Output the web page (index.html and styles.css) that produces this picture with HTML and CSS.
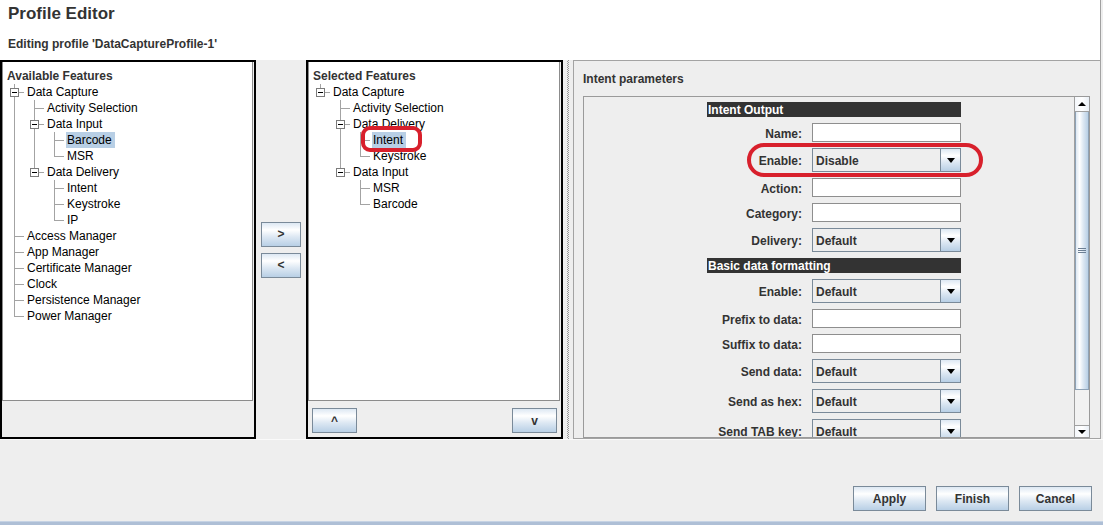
FILE: index.html
```
<!DOCTYPE html>
<html>
<head>
<meta charset="utf-8">
<title>Profile Editor</title>
<link rel="stylesheet" href="styles.css">
</head>
<body>
<div class="header">
  <div class="title">Profile Editor</div>
  <div class="subtitle">Editing profile 'DataCaptureProfile-1'</div>
</div>
<div class="main">
  <div class="panel">
    <div class="tree">
      <div class="tree-head">Available Features</div>
      <div class="row"><span class="g tee"><i class="box"></i></span><span class="lbl">Data Capture</span></div>
      <div class="row"><span class="g pipe"></span><span class="g tee"></span><span class="lbl">Activity Selection</span></div>
      <div class="row"><span class="g pipe"></span><span class="g tee"><i class="box"></i></span><span class="lbl">Data Input</span></div>
      <div class="row sel"><span class="g pipe"></span><span class="g pipe"></span><span class="g tee"></span><span class="lbl">Barcode</span></div>
      <div class="row"><span class="g pipe"></span><span class="g pipe"></span><span class="g end"></span><span class="lbl">MSR</span></div>
      <div class="row"><span class="g pipe"></span><span class="g end"><i class="box"></i></span><span class="lbl">Data Delivery</span></div>
      <div class="row"><span class="g pipe"></span><span class="g"></span><span class="g tee"></span><span class="lbl">Intent</span></div>
      <div class="row"><span class="g pipe"></span><span class="g"></span><span class="g tee"></span><span class="lbl">Keystroke</span></div>
      <div class="row"><span class="g pipe"></span><span class="g"></span><span class="g end"></span><span class="lbl">IP</span></div>
      <div class="row"><span class="g tee"></span><span class="lbl">Access Manager</span></div>
      <div class="row"><span class="g tee"></span><span class="lbl">App Manager</span></div>
      <div class="row"><span class="g tee"></span><span class="lbl">Certificate Manager</span></div>
      <div class="row"><span class="g tee"></span><span class="lbl">Clock</span></div>
      <div class="row"><span class="g tee"></span><span class="lbl">Persistence Manager</span></div>
      <div class="row"><span class="g end"></span><span class="lbl">Power Manager</span></div>
    </div>
    <div class="panel-foot"></div>
  </div>
  <div class="movers">
    <button class="btn mover">&gt;</button>
    <button class="btn mover">&lt;</button>
  </div>
  <div class="panel panel-mid">
    <div class="tree">
      <div class="tree-head">Selected Features</div>
      <div class="row"><span class="g end"><i class="box"></i></span><span class="lbl">Data Capture</span></div>
      <div class="row"><span class="g"></span><span class="g tee"></span><span class="lbl">Activity Selection</span></div>
      <div class="row"><span class="g"></span><span class="g tee"><i class="box"></i></span><span class="lbl">Data Delivery</span></div>
      <div class="row sel"><span class="g"></span><span class="g pipe"></span><span class="g tee"></span><span class="lbl">Intent</span></div>
      <div class="row"><span class="g"></span><span class="g pipe"></span><span class="g end"></span><span class="lbl">Keystroke</span></div>
      <div class="row"><span class="g"></span><span class="g end"><i class="box"></i></span><span class="lbl">Data Input</span></div>
      <div class="row"><span class="g"></span><span class="g"></span><span class="g tee"></span><span class="lbl">MSR</span></div>
      <div class="row"><span class="g"></span><span class="g"></span><span class="g end"></span><span class="lbl">Barcode</span></div>
      <div class="mark-intent"></div>
    </div>
    <div class="panel-foot order-btns">
      <button class="btn order">^</button>
      <button class="btn order">v</button>
    </div>
  </div>
  <div class="splitter"><div class="dots"></div></div>
  <div class="params">
    <div class="params-title">Intent parameters</div>
    <div class="params-box">
      <div class="form-area">
        <div class="form">
          <div class="sec">Intent Output</div>
          <div class="lab">Name:</div><div class="inp"></div>
          <div class="lab">Enable:</div><div class="combo"><span class="val">Disable</span><span class="arr"></span></div>
          <div class="lab">Action:</div><div class="inp"></div>
          <div class="lab">Category:</div><div class="inp"></div>
          <div class="lab">Delivery:</div><div class="combo"><span class="val">Default</span><span class="arr"></span></div>
          <div class="sec">Basic data formatting</div>
          <div class="lab">Enable:</div><div class="combo"><span class="val">Default</span><span class="arr"></span></div>
          <div class="lab">Prefix to data:</div><div class="inp"></div>
          <div class="lab">Suffix to data:</div><div class="inp"></div>
          <div class="lab">Send data:</div><div class="combo"><span class="val">Default</span><span class="arr"></span></div>
          <div class="lab">Send as hex:</div><div class="combo"><span class="val">Default</span><span class="arr"></span></div>
          <div class="lab">Send TAB key:</div><div class="combo"><span class="val">Default</span><span class="arr"></span></div>
        </div>
        <div class="mark-enable"></div>
      </div>
      <div class="vscroll">
        <div class="sb-btn sb-up"><span class="tri-up"></span></div>
        <div class="sb-thumb"><span class="grip"></span></div>
        <div class="sb-track"></div>
        <div class="sb-btn sb-down"><span class="tri-down"></span></div>
      </div>
    </div>
  </div>
</div>
<div class="footer">
  <button class="btn foot">Apply</button>
  <button class="btn foot">Finish</button>
  <button class="btn foot">Cancel</button>
</div>
<div class="winbar"></div>
</body>
</html>
```
FILE: styles.css
```
* { box-sizing: border-box; }
body {
  margin: 0;
  width: 1103px;
  height: 525px;
  overflow: hidden;
  background: #eeeeee;
  font-family: "Liberation Sans", Arial, sans-serif;
  font-size: 12px;
  color: #000;
}
.header {
  height: 60px;
  width: 1101px;
  background: #fff;
  border-right: 1px solid #a0a0a0;
  padding: 4px 0 0 8px;
  color: #333;
}
.title { font-size: 17px; font-weight: bold; line-height: 20px; }
.subtitle { font-weight: bold; line-height: 16px; margin-top: 12px; }

.main { display: flex; height: 379px; }

.panel {
  width: 256px;
  border: 2px solid #000;
  display: flex;
  flex-direction: column;
}
.panel-mid { width: 257px; }
.tree {
  position: relative;
  height: 339px;
  flex: none;
  background: #fff;
  border: 1px solid #8c8c8c;
  border-top: 0;
  margin-right: 1px;
  padding: 6px 0 0 3px;
}
.panel-foot { flex: 1; }
.order-btns {
  display: flex;
  justify-content: space-between;
  align-items: flex-start;
  padding: 7px 4px 0 4px;
}
.tree-head {
  font-weight: bold;
  color: #333;
  height: 16px;
  line-height: 16px;
  padding-left: 1px;
}
.row { display: flex; height: 16px; line-height: 16px; white-space: nowrap; }
.g { position: relative; width: 20px; flex: none; }
.g.pipe::before, .g.tee::before, .g.end::before {
  content: "";
  position: absolute;
  left: 8px;
  top: 0;
  bottom: 0;
  border-left: 1px solid #a3a3a3;
}
.g.end::before { bottom: auto; height: 9px; }
.g.tee::after, .g.end::after {
  content: "";
  position: absolute;
  left: 9px;
  top: 8px;
  width: 9px;
  border-top: 1px solid #a3a3a3;
}
.box {
  position: absolute;
  left: 4px;
  top: 4px;
  width: 9px;
  height: 9px;
  border: 1px solid #7b7b7b;
  background: #fff;
  z-index: 1;
}
.box::after {
  content: "";
  position: absolute;
  left: 1px;
  top: 3px;
  width: 5px;
  height: 1px;
  background: #000;
}
.lbl { padding: 0 3px 0 1px; }
.row.sel .lbl { background: #b8cfe5; }

.mark-intent {
  position: absolute;
  left: 52px;
  top: 64px;
  width: 61px;
  height: 26px;
  border: 4px solid #d8202c;
  border-radius: 9px;
}

.btn {
  font-family: "Liberation Sans", Arial, sans-serif;
  font-size: 12px;
  font-weight: bold;
  color: #333;
  border: 1px solid #7a8a99;
  border-radius: 0;
  padding: 0;
  margin: 0;
  background: linear-gradient(#dde8f3 0%, #ffffff 30%, #dde8f3 60%, #b8cfe5 100%);
}
.movers {
  width: 50px;
  display: flex;
  flex-direction: column;
  align-items: center;
  justify-content: center;
  gap: 6px;
}
.mover { width: 40px; height: 25px; }
.order { width: 45px; height: 25px; }

.splitter { width: 10px; display: flex; justify-content: center; }
.dots {
  width: 2px;
  background: repeating-conic-gradient(#9a9a9a 0 25%, transparent 0 50%) 0 0 / 2px 2px;
}

.params {
  width: 528px;
  border: 1px solid #a3a3a3;
  display: flex;
  flex-direction: column;
  padding: 10px 10px 0 9px;
}
.params-title {
  font-weight: bold;
  color: #333;
  line-height: 16px;
  margin-bottom: 9px;
}
.params-box {
  flex: 1;
  min-height: 0;
  display: flex;
  border: 1px solid #9a9a9a;
  overflow: hidden;
}
.form-area {
  flex: 1;
  position: relative;
  padding: 5px 0 0 123px;
}
.form {
  display: grid;
  grid-template-columns: 95px 149px;
  column-gap: 10px;
  row-gap: 6px;
  width: 254px;
}
.sec {
  grid-column: 1 / 3;
  background: #333;
  color: #fff;
  font-weight: bold;
  height: 15px;
  line-height: 15px;
  padding: 1px 0 0 1px;
  overflow: hidden;
}
.lab {
  text-align: right;
  font-weight: bold;
  color: #333;
  align-self: center;
  line-height: 16px;
  padding-top: 2px;
  white-space: nowrap;
}
.inp { height: 19px; background: #fff; border: 1px solid #8e8e8e; }
.combo {
  height: 24px;
  display: flex;
  border: 1px solid #7a8a99;
  background: #eeeeee;
}
.combo .val {
  flex: 1;
  font-weight: bold;
  color: #333;
  line-height: 22px;
  padding: 1px 0 0 3px;
}
.combo .arr {
  width: 20px;
  border-left: 1px solid #7a8a99;
  background: linear-gradient(#dde8f3 0%, #ffffff 30%, #dde8f3 60%, #b8cfe5 100%);
  display: flex;
  align-items: center;
  justify-content: center;
}
.combo .arr::before {
  content: "";
  border-style: solid;
  border-width: 5px 4.5px 0;
  border-color: #000 transparent transparent;
}
.mark-enable {
  position: absolute;
  left: 163px;
  top: 46px;
  width: 236px;
  height: 34px;
  border: 4px solid #d8202c;
  border-radius: 18px;
}

.vscroll {
  width: 15px;
  flex: none;
  display: flex;
  flex-direction: column;
  border-left: 1px solid #a0a0a0;
  background: #f2f2f2;
}
.sb-btn {
  display: flex;
  align-items: center;
  justify-content: center;
  background: linear-gradient(to right, #f4f7fb, #ffffff 50%, #e9eff6);
}
.sb-up { height: 15px; border-bottom: 1px solid #a0a0a0; }
.sb-down { height: 12px; border-top: 1px solid #a0a0a0; }
.tri-up { border-style: solid; border-width: 0 4px 4px; border-color: transparent transparent #000; }
.tri-down { border-style: solid; border-width: 4px 4px 0; border-color: #000 transparent transparent; }
.sb-thumb {
  height: 278px;
  border: 1px solid #8ea2b6;
  border-top: 0;
  background: linear-gradient(to right, #dde8f3 0%, #ffffff 30%, #dde8f3 60%, #b8cfe5 100%);
  display: flex;
  align-items: center;
  justify-content: center;
}
.grip {
  width: 8px;
  height: 5px;
  background: repeating-linear-gradient(#6c7f94 0 1px, transparent 1px 2px);
}
.sb-track { flex: 1; }

.footer {
  height: 82px;
  border-top: 1px solid #fafafa;
  display: flex;
  justify-content: flex-end;
  align-items: flex-start;
  gap: 10px;
  padding: 46px 11px 0 0;
}
.foot { width: 73px; height: 25px; }
.winbar {
  height: 4px;
  background: #aebfd6;
  border-top: 1px solid #c6d3e4;
}
```
